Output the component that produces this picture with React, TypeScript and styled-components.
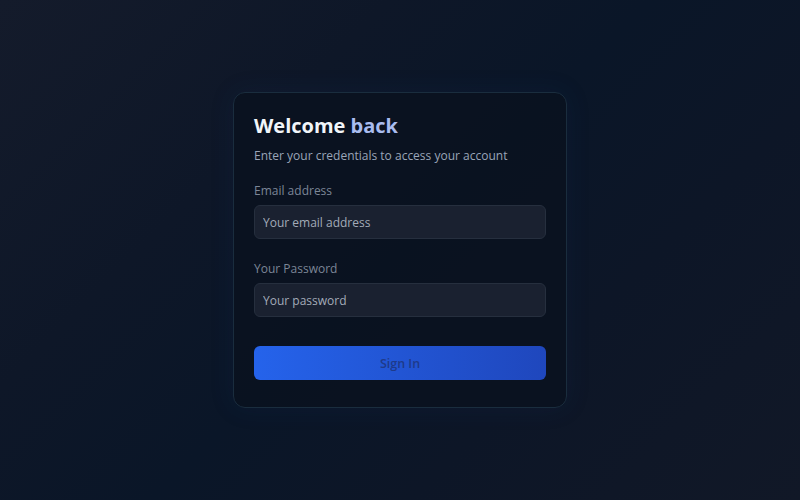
import React from "react";
import styled, { createGlobalStyle } from "styled-components";

const GlobalStyle = createGlobalStyle`
  * { box-sizing: border-box; }
  html, body { margin: 0; padding: 0; }
  body {
    font-family: "Open Sans", "Noto Sans", sans-serif;
    background: #0f1626;
  }
`;

const Page = styled.div`
  width: 800px;
  height: 500px;
  display: flex;
  align-items: center;
  justify-content: center;
  background: linear-gradient(135deg, #141b2b 0%, #0e1728 30%, #0a1628 50%, #0d1627 70%, #111827 100%);
`;

const Card = styled.div`
  width: 334px;
  padding: 20px 20px 27px;
  border: 1px solid #1a2d3e;
  border-radius: 12px;
  background: rgba(10, 17, 31, 0.82);
  box-shadow: 0 0 24px rgba(20, 60, 110, 0.14);
  display: flex;
  flex-direction: column;
`;

const Title = styled.h1`
  margin: 0;
  font-size: 20px;
  line-height: 26px;
  font-weight: 700;
  color: #f1f5f9;
`;

const Accent = styled.span`
  color: #a9bcef;
`;

const Subtitle = styled.p`
  margin: 8px 0 0;
  font-size: 12px;
  line-height: 18px;
  color: #9aa5b8;
`;

const Field = styled.div<{ $top: number }>`
  margin-top: ${(p) => p.$top}px;
  display: flex;
  flex-direction: column;
  gap: 5px;
`;

const Label = styled.label`
  font-size: 12px;
  line-height: 18px;
  color: #7c8697;
`;

const Input = styled.input`
  height: 34px;
  width: 100%;
  padding: 0 8px;
  border: 1px solid #262f3e;
  border-radius: 6px;
  background: #1a2130;
  font-family: inherit;
  font-size: 12px;
  color: #e2e8f0;
  outline: none;
  &::placeholder { color: #a3abb8; }
`;

const Button = styled.button`
  margin-top: 29px;
  height: 34px;
  width: 100%;
  border: none;
  border-radius: 6px;
  background: linear-gradient(90deg, #2563eb 0%, #1f47bd 100%);
  font-family: inherit;
  font-size: 12.5px;
  font-weight: 600;
  color: #1e3a8a;
  cursor: pointer;
`;

export default function App() {
  return (
    <>
      <GlobalStyle />
      <Page>
        <Card>
          <Title>
            Welcome <Accent>back</Accent>
          </Title>
          <Subtitle>Enter your credentials to access your account</Subtitle>
          <Field $top={17}>
            <Label>Email address</Label>
            <Input type="email" placeholder="Your email address" />
          </Field>
          <Field $top={21}>
            <Label>Your Password</Label>
            <Input type="password" placeholder="Your password" />
          </Field>
          <Button>Sign In</Button>
        </Card>
      </Page>
    </>
  );
}
